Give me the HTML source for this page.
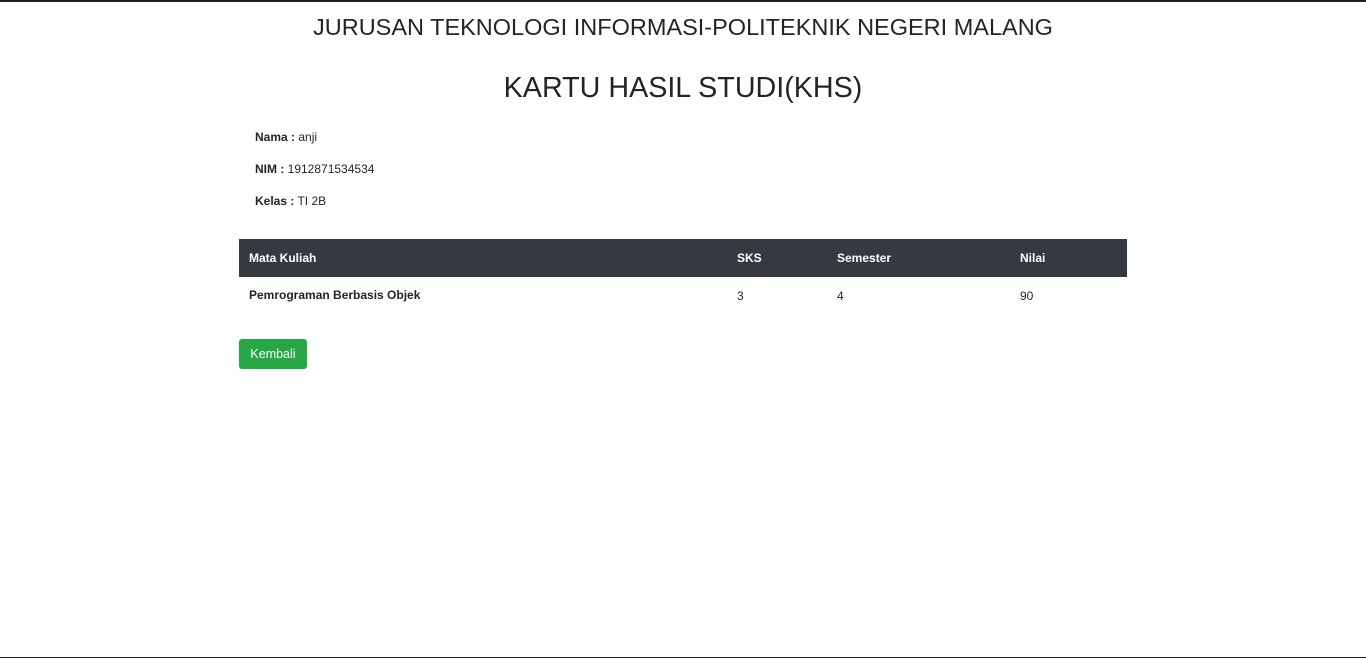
<!DOCTYPE html>
<html><head><meta charset="utf-8"><style>
body{margin:0;width:1366px;height:658px;background:#fff;font-family:"Liberation Sans",sans-serif;color:#212529;position:relative;overflow:hidden}
.t{position:absolute;left:0;width:1366px;text-align:center;white-space:nowrap}
.a{position:absolute;white-space:nowrap;font-size:12px}
b{font-weight:bold}
</style></head><body>
<div style="position:absolute;left:0;top:0;width:1366px;height:2px;background:#222"></div>
<div style="position:absolute;left:0;top:657px;width:1366px;height:1px;background:#222"></div>
<div class="t" style="top:11px;font-size:23.5px;line-height:32px">JURUSAN TEKNOLOGI INFORMASI-POLITEKNIK NEGERI MALANG</div>
<div class="t" style="top:67px;font-size:28.7px;line-height:42px">KARTU HASIL STUDI(KHS)</div>
<div class="a" style="left:255px;top:130px"><b>Nama :</b> anji</div>
<div class="a" style="left:255px;top:162px"><b>NIM :</b> 1912871534534</div>
<div class="a" style="left:255px;top:194px"><b>Kelas :</b> TI 2B</div>
<div style="position:absolute;left:239px;top:239px;width:888px;height:38px;background:#343a40"></div>
<div class="a" style="left:249px;top:251px;color:#fff"><b>Mata Kuliah</b></div>
<div class="a" style="left:737px;top:251px;color:#fff"><b>SKS</b></div>
<div class="a" style="left:837px;top:251px;color:#fff"><b>Semester</b></div>
<div class="a" style="left:1020px;top:251px;color:#fff"><b>Nilai</b></div>
<div class="a" style="left:249px;top:288px"><b>Pemrograman Berbasis Objek</b></div>
<div class="a" style="left:737px;top:289px">3</div>
<div class="a" style="left:837px;top:289px">4</div>
<div class="a" style="left:1020px;top:289px">90</div>
<div style="position:absolute;left:239px;top:339px;width:68px;height:30px;background:#28a745;border-radius:3px;color:#fff;font-size:12.5px;line-height:30px;text-align:center">Kembali</div>
</body></html>
